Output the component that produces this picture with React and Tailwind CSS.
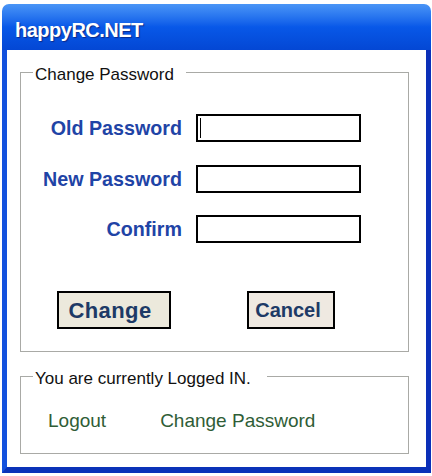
import React from 'react';

const fieldFont = { fontFamily: '"Liberation Sans", Arial, sans-serif' };

const PasswordRow = ({ label, focused }) => (
    <div className="flex items-center h-[28px]">
        <span className="w-[161px] text-right font-bold text-[19.7px] leading-[22px] text-[#1f44a6]">{label}</span>
        <div className="ml-[14px] w-[165px] h-[28px] border-2 border-black bg-white flex items-center">
            {focused && <span className="ml-[2px] w-[1px] h-[20px] bg-black" />}
        </div>
    </div>
);

const GroupBox = ({ title, titlePad, className, children }) => (
    <fieldset className={`border border-[#a9aaa6] min-w-0 ${className}`}>
        <legend className={`ml-[12px] pl-[2px] ${titlePad} pt-[6px] text-[17px] leading-[20px] text-[#111]`}>{title}</legend>
        {children}
    </fieldset>
);

const App = () => {
    return (
        <div className="w-[432px] h-[476px] bg-white pt-[4px] pl-[2px] pr-[1px]" style={fieldFont}>
            <div className="h-[469px] flex flex-col">
                {/* XP style caption */}
                <div className="h-[46px] shrink-0 rounded-t-[7px] bg-gradient-to-b from-[#4a95f6] via-[#0858e8] to-[#0447d4] flex items-center pl-[13px] pt-[6px]">
                    <span className="text-white font-bold text-[20px] tracking-[-0.5px] [text-shadow:1px_1px_1px_#0b2a8a]">happyRC.NET</span>
                </div>

                <div className="flex-1 bg-white border-l-[5px] border-l-[#1351de] border-r-[5px] border-r-[#0b2fb8] border-b-[6px] border-b-[#0a32b8] pt-[9px] pl-[13px] pr-[17px]">
                    <GroupBox title="Change Password" titlePad="pr-[12px]">
                        <div className="pt-[29px] pb-[22px] flex flex-col">
                            <div className="flex flex-col gap-[22.5px]">
                                <PasswordRow label="Old Password" focused />
                                <PasswordRow label="New Password" />
                                <PasswordRow label="Confirm" />
                            </div>
                            <div className="mt-[48px] flex items-center pl-[36px]">
                                <button className="w-[114px] h-[38px] border-2 border-black bg-[#ece9dc] pr-[8px] font-bold text-[22px] tracking-[0.4px] text-[#1d3a66]">
                                    Change
                                </button>
                                <button className="ml-[76px] w-[88px] h-[38px] border-2 border-black bg-[#efe9e1] pr-[6px] font-bold text-[20px] text-[#1d3a66]">
                                    Cancel
                                </button>
                            </div>
                        </div>
                    </GroupBox>

                    <GroupBox title="You are currently Logged IN." titlePad="pr-[16px]" className="mt-[11px]">
                        <div className="pt-[21px] pb-[21px] pl-[27px] flex items-center text-[19px] leading-[22px] text-[#2f5d36]">
                            <span>Logout</span>
                            <span className="ml-[54px]">Change Password</span>
                        </div>
                    </GroupBox>
                </div>
            </div>
        </div>
    );
};

export default App;
